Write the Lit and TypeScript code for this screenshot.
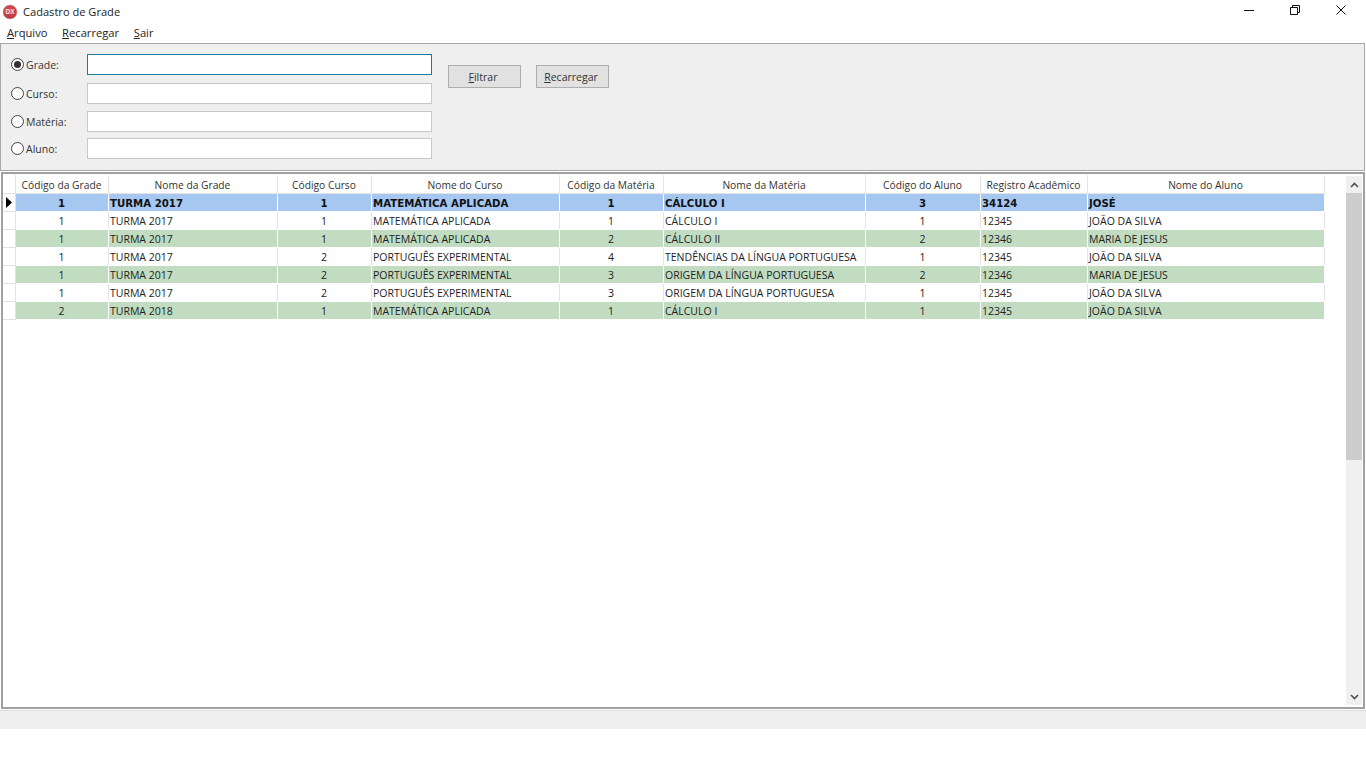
import { LitElement, html, css } from "lit";
import { customElement } from "lit/decorators.js";

const cols = [
  { t: "Código da Grade", w: 93, c: true },
  { t: "Nome da Grade", w: 169 },
  { t: "Código Curso", w: 94, c: true },
  { t: "Nome do Curso", w: 188 },
  { t: "Código da Matéria", w: 104, c: true },
  { t: "Nome da Matéria", w: 202 },
  { t: "Código do Aluno", w: 115, c: true },
  { t: "Registro Acadêmico", w: 107 },
  { t: "Nome do Aluno", w: 237 },
];
const rows: string[][] = [
  ["1", "TURMA 2017", "1", "MATEMÁTICA APLICADA", "1", "CÁLCULO I", "3", "34124", "JOSÉ"],
  ["1", "TURMA 2017", "1", "MATEMÁTICA APLICADA", "1", "CÁLCULO I", "1", "12345", "JOÃO DA SILVA"],
  ["1", "TURMA 2017", "1", "MATEMÁTICA APLICADA", "2", "CÁLCULO II", "2", "12346", "MARIA DE JESUS"],
  ["1", "TURMA 2017", "2", "PORTUGUÊS EXPERIMENTAL", "4", "TENDÊNCIAS DA LÍNGUA PORTUGUESA", "1", "12345", "JOÃO DA SILVA"],
  ["1", "TURMA 2017", "2", "PORTUGUÊS EXPERIMENTAL", "3", "ORIGEM DA LÍNGUA PORTUGUESA", "2", "12346", "MARIA DE JESUS"],
  ["1", "TURMA 2017", "2", "PORTUGUÊS EXPERIMENTAL", "3", "ORIGEM DA LÍNGUA PORTUGUESA", "1", "12345", "JOÃO DA SILVA"],
  ["2", "TURMA 2018", "1", "MATEMÁTICA APLICADA", "1", "CÁLCULO I", "1", "12345", "JOÃO DA SILVA"],
];
const filters = ["Grade:", "Curso:", "Matéria:", "Aluno:"];

@customElement("app-root")
export class AppRoot extends LitElement {
  static styles = css`
    :host { display: block; width: 1366px; height: 768px; background: #fff; overflow: hidden;
      font-family: "Open Sans", "Liberation Sans", sans-serif; font-size: 10.5px; color: #1a1a1a; }
    .title { height: 22px; display: flex; align-items: center; font-size: 11.1px; color: #222; }
    .logo { margin: 0 5px 0 2px; width: 16px; height: 16px; display: block; flex: none; }
    .winbtns { margin-left: auto; margin-right: 2px; display: flex; align-self: flex-start; }
    .winbtn { width: 46px; height: 20px; display: flex; align-items: center; justify-content: center; }
    .menu { height: 20px; display: flex; align-items: center; padding-left: 7px; gap: 14.6px; font-size: 11.2px; color: #222; }
    u { text-decoration-thickness: 1px; text-underline-offset: 1px; }
    .panel { margin-top: 1px; height: 126px; width: 1363px; background: #efefef; border: 1px solid #a8a8a8; display: flex; }
    .filters { margin: 10px 0 0 10px; display: grid; grid-template-columns: 76px 345px; grid-template-rows: 29px 28px 27px 22px; }
    .label-wrap { height: 21px; display: flex; align-items: center; gap: 2px; color: #333; }
    .dot { width: 13px; height: 13px; border: 1px solid #444; border-radius: 50%; background: #fff; box-sizing: border-box; display: flex; align-items: center; justify-content: center; flex: none; }
    .dot.on::after { content: ""; width: 7px; height: 7px; border-radius: 50%; background: #333; }
    .input { height: 21px; box-sizing: border-box; background: #fff; border: 1px solid #c8c8c8; }
    .input.focus { border-color: #1c7a9c; }
    .buttons { margin: 21px 0 0 16px; display: flex; gap: 15px; align-items: flex-start; }
    .btn { width: 73px; height: 23px; box-sizing: border-box; padding-right: 3px; background: #e1e1e1; border: 1px solid #adadad; display: flex; align-items: center; justify-content: center; color: #333; }
    .grid { margin: 1px 0 0 1px; width: 1360px; height: 533px; border: 2px solid #a0a0a0; background: #fff; position: relative; display: flex; }
    .table { margin-top: 1px; flex: none; }
    .row { display: flex; height: 18px; }
    .row.head { height: 19px; }
    .ind { width: 13px; box-sizing: border-box; border-right: 1px solid #e2e2e2; border-bottom: 1px solid #e2e2e2; display: flex; align-items: center; padding-left: 3px; flex: none; }
    .cell { box-sizing: border-box; border-right: 1px solid #e4e4e4; line-height: 18px; padding: 0 2px 0 1px; white-space: nowrap; overflow: hidden; flex: none; color: #222; }
    .row.head .cell { text-align: center; color: #333; border-bottom: 1px solid #e4e4e4; font-size: 10.25px; line-height: 20px; }
    .cell.c { text-align: center; }
    .sel .cell { background: #a6c8f0; border-right-color: #fff; font-family: "DejaVu Sans", sans-serif; font-size: 10.2px; font-weight: bold; color: #111; line-height: 20px; }
    .alt .cell { background: #c1dcc1; border-right-color: #fff; }
    .row.body .cell { border-bottom: 1px solid #fff; }
    .scroll { position: absolute; right: 1px; top: 2px; bottom: 2px; width: 16px; background: #f0f0f0; display: flex; flex-direction: column; }
    .arrow { height: 17px; display: flex; align-items: center; justify-content: center; flex: none; }
    .thumb { height: 267px; background: #cdcdcd; flex: none; }
    .spacer { flex: 1; }
    .status { margin-top: 1px; height: 19px; background: #efefef; border-top: 1px solid #dcdcdc; box-sizing: border-box; }
  `;

  render() {
    return html`
      <div class="title">
        <svg class="logo" viewBox="0 0 16 16">
          <defs>
            <radialGradient id="lg" cx="50%" cy="40%" r="60%">
              <stop offset="0" stop-color="#e0565c"/>
              <stop offset="1" stop-color="#b8323a"/>
            </radialGradient>
          </defs>
          <circle cx="8" cy="9" r="7" fill="url(#lg)" stroke="#c9a0a2" stroke-width=".6"/>
          <text x="8" y="11.3" font-size="6.5" font-weight="bold" fill="#f4e4e4" text-anchor="middle" font-family="Liberation Sans">DX</text>
        </svg>
        <span>Cadastro de Grade</span>
        <div class="winbtns">
          <div class="winbtn"><svg width="10" height="10" viewBox="0 0 10 10"><path d="M0 5.5H10" stroke="#111"/></svg></div>
          <div class="winbtn"><svg width="10" height="10" viewBox="0 0 10 10" fill="none" stroke="#111"><path d="M.5 2.5h7v7h-7zM2.5 2.5v-2h7v7h-2"/></svg></div>
          <div class="winbtn"><svg width="10" height="10" viewBox="0 0 10 10" fill="none" stroke="#111"><path d="M.5.5l9 9M9.5.5l-9 9"/></svg></div>
        </div>
      </div>
      <div class="menu"><span><u>A</u>rquivo</span><span><u>R</u>ecarregar</span><span><u>S</u>air</span></div>
      <div class="panel">
        <div class="filters">
          ${filters.map((f, i) => html`
            <div class="label-wrap"><span class="dot ${i === 0 ? "on" : ""}"></span><span>${f}</span></div>
            <div class="input ${i === 0 ? "focus" : ""}"></div>`)}
        </div>
        <div class="buttons">
          <div class="btn"><span><u>F</u>iltrar</span></div>
          <div class="btn"><span><u>R</u>ecarregar</span></div>
        </div>
      </div>
      <div class="grid">
        <div class="table">
          <div class="row head">
            <div class="ind"></div>
            ${cols.map((c) => html`<div class="cell" style="width:${c.w}px">${c.t}</div>`)}
          </div>
          ${rows.map((r, i) => html`
            <div class="row body ${i === 0 ? "sel" : i % 2 === 0 || i === 4 ? "alt" : ""}">
              <div class="ind">${i === 0 ? html`<svg width="6" height="11" viewBox="0 0 6 11"><path d="M0 0L6 5.5L0 11Z" fill="#000"/></svg>` : ""}</div>
              ${r.map((v, j) => html`<div class="cell ${cols[j].c ? "c" : ""}" style="width:${cols[j].w}px">${v}</div>`)}
            </div>`)}
        </div>
        <div class="scroll">
          <div class="arrow"><svg width="9" height="6" viewBox="0 0 9 6"><path d="M1 5l3.5-3.5L8 5" fill="none" stroke="#505050" stroke-width="1.6"/></svg></div>
          <div class="thumb"></div>
          <div class="spacer"></div>
          <div class="arrow"><svg width="9" height="6" viewBox="0 0 9 6"><path d="M1 1l3.5 3.5L8 1" fill="none" stroke="#505050" stroke-width="1.6"/></svg></div>
        </div>
      </div>
      <div class="status"></div>
    `;
  }
}
